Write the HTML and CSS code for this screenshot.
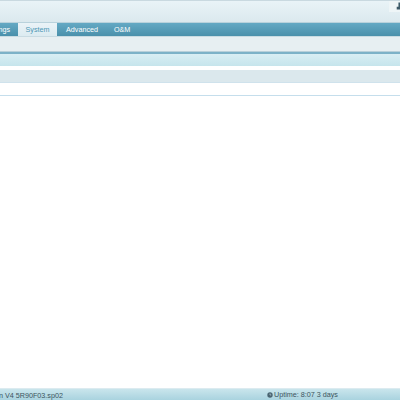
FILE: index.html
```html
<!DOCTYPE html>
<html>
<head>
<meta charset="utf-8">
<title>System</title>
<link rel="stylesheet" href="styles.css">
</head>
<body>
<div class="page">
  <header class="top">
    <div class="user"><svg class="user-icon" viewBox="0 0 10 10"><path d="M3.5 0h3v6h3v4H1V6h2.5z" fill="#3c5a68"/></svg></div>
  </header>
  <nav class="tabs">
    <a class="tab">Settings</a>
    <a class="tab active">System</a>
    <a class="tab">Advanced</a>
    <a class="tab">O&amp;M</a>
  </nav>
  <div class="subbar"></div>
  <div class="band-a"></div>
  <div class="band-b"></div>
  <div class="blank"></div>
  <main class="content"></main>
  <footer class="foot">
    <span class="version">Version V4 5R90F03.sp02</span>
    <span class="uptime"><svg class="clock" viewBox="0 0 10 10"><circle cx="5" cy="5" r="4.5" fill="#4a6572"/><path d="M5 2.5V5h2" stroke="#cfe3ea" fill="none"/></svg>Uptime: 8:07 3 days</span>
  </footer>
</div>
</body>
</html>
```
FILE: styles.css
```css
html, body { margin: 0; height: 100%; background: #fff; }
.page { width: 400px; height: 400px; display: flex; flex-direction: column; overflow: hidden; font-family: "Liberation Sans", Arial, sans-serif; font-size: 7.2px; }
.top { height: 22px; box-sizing: border-box; border-top: 1px solid #c9d9e0; background: linear-gradient(#e9f3f7, #dbe9ee); display: flex; justify-content: flex-end; align-items: flex-start; }
.user { width: 11px; height: 11px; background: #eef5f7; display: flex; justify-content: flex-end; padding-top: 1px; box-sizing: border-box; }
.user-icon { width: 7px; height: 8px; margin-right: -3px; }
.tabs { height: 15px; box-sizing: border-box; border-top: 1px solid #b9d2dc; background: linear-gradient(#64a9c4, #4a90ab); display: flex; align-items: stretch; padding-left: 18px; position: relative; border-bottom: 1px solid #c9dbe2; }
.tab { color: #fff; line-height: 14px; padding: 0 8px; }
.tab:first-child { position: absolute; right: 100%; margin-right: -18px; padding: 0 8px 0 0; }
.tab.active { color: #4d97b5; background: linear-gradient(#eaf3f7, #dcebf1); width: 39px; box-sizing: border-box; text-align: center; padding: 0; }
.tab:nth-child(3) { margin-left: 1px; }
.subbar { height: 14px; background: #e7eff2; border-bottom: 1px solid #b9d0da; }
.band-a { height: 12px; border-top: 2px solid #7db2c8; background: linear-gradient(#d9eef4, #c6e5ec); margin-bottom: 4px; }
.band-b { height: 12px; background: #dbe8ed; border-bottom: 1px solid #cfe2ec; }
.blank { height: 12px; border-bottom: 1px solid #c5deec; }
.content { flex: 1; }
.foot { height: 12px; background: linear-gradient(#c9e5ec, #a9d3df); display: flex; color: #3c5560; line-height: 13px; border-top: 1px solid #dcebf0; box-sizing: border-box; }
.version { margin-left: -21px; width: 288px; }
.uptime { display: flex; align-items: center; gap: 1px; }
.clock { width: 6px; height: 6px; }
```
